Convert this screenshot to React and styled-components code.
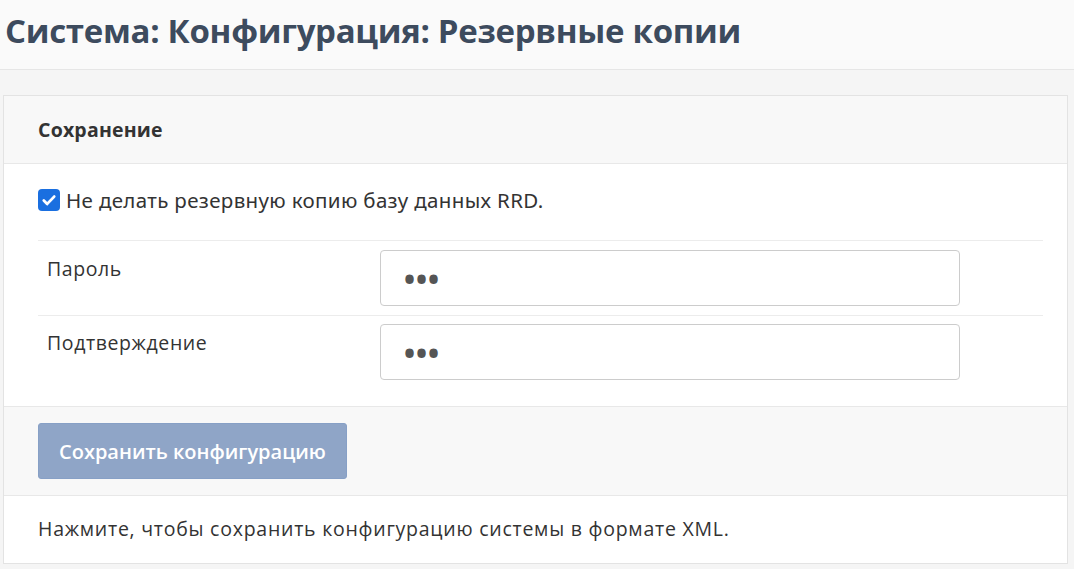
import React from 'react';
import styled, { createGlobalStyle } from 'styled-components';

const Global = createGlobalStyle`
	body {
		margin: 0;
		background: #f5f5f5;
		font-family: "Open Sans", "Noto Sans", sans-serif;
		color: #333;
	}
`;

const TitleBar = styled.header`
	height: 70px;
	background: #fafafa;
	border-bottom: 1px solid #e6e6e6;
	display: flex;
	align-items: center;
	padding: 0 5px 9px;
	box-sizing: border-box;
`;

const Title = styled.h1`
	margin: 0;
	font-size: 33px;
	font-weight: 700;
	color: #3d4b5e;
	letter-spacing: -0.3px;
`;

const Content = styled.main`
	padding: 25px 6px 0 3px;
`;

const Panel = styled.section`
	background: #fff;
	border: 1px solid #e3e3e3;
`;

const PanelHeading = styled.div`
	height: 68px;
	display: flex;
	align-items: center;
	padding: 0 34px;
	background: #f8f8f8;
	border-bottom: 1px solid #e8e8e8;
	font-size: 19.5px;
	font-weight: 700;
	letter-spacing: 0.2px;
	color: #333;
	box-sizing: border-box;
`;

const PanelBody = styled.div`
	padding: 0 24px 0 34px;
`;

const CheckRow = styled.label`
	height: 77px;
	display: flex;
	align-items: center;
	gap: 6px;
	font-family: "Noto Sans", sans-serif;
	font-size: 20.5px;
	letter-spacing: 0.35px;
	border-bottom: 1px solid #ececec;
	padding-bottom: 5px;
	box-sizing: border-box;
`;

const Box = styled.span`
	width: 22px;
	height: 22px;
	border-radius: 4px;
	background: #1a6fe0;
	display: inline-flex;
	align-items: center;
	justify-content: center;
	flex-shrink: 0;
`;

const FormRow = styled.div`
	display: grid;
	grid-template-columns: 342px 580px 1fr;
	padding: ${p => p.$last ? '8px 0 26px' : '9px 0 9px'};
	border-bottom: ${p => p.$last ? 'none' : '1px solid #ececec'};
`;

const Label = styled.div`
	padding: 5px 0 0 9px;
	font-size: 19.5px;
	letter-spacing: 0.6px;
	color: #333;
`;

const Input = styled.input`
	height: 56px;
	box-sizing: border-box;
	border: 1px solid #ccc;
	border-radius: 4px;
	padding: 0 21px;
	font-size: 40px;
	color: #555;
	letter-spacing: -3px;
	font-family: inherit;
	outline: none;
`;

const Footer = styled.div`
	background: #f8f8f8;
	border-top: 1px solid #e8e8e8;
	border-bottom: 1px solid #e8e8e8;
	padding: 16px 34px;
`;

const Button = styled.button`
	height: 56px;
	padding: 0 20px;
	background: #8fa5c7;
	border: 1px solid #87a0c6;
	border-radius: 3px;
	color: #fff;
	font-size: 20px;
	font-family: inherit;
	font-weight: 600;
`;

const Note = styled.p`
	margin: 0;
	height: 67px;
	display: flex;
	align-items: center;
	padding: 0 34px 2px;
	font-size: 19.5px;
	letter-spacing: 0.75px;
	color: #333;
	box-sizing: border-box;
`;

const Check = () => (
	<Box>
		<svg width="16" height="16" viewBox="0 0 16 16">
			<path d="M2.8 8.6l3.4 3.3L13.2 4.6" fill="none" stroke="#fff" strokeWidth="2.8" strokeLinecap="round" strokeLinejoin="round" />
		</svg>
	</Box>
);

const App = () => {
	return (
		<>
			<Global />
			<TitleBar>
				<Title>Система: Конфигурация: Резервные копии</Title>
			</TitleBar>
			<Content>
				<Panel>
					<PanelHeading>Сохранение</PanelHeading>
					<PanelBody>
						<CheckRow>
							<Check />
							Не делать резервную копию базу данных RRD.
						</CheckRow>
						<FormRow>
							<Label>Пароль</Label>
							<Input type="password" defaultValue="abc" />
						</FormRow>
						<FormRow $last>
							<Label>Подтверждение</Label>
							<Input type="password" defaultValue="abc" />
						</FormRow>
					</PanelBody>
					<Footer>
						<Button disabled>Сохранить конфигурацию</Button>
					</Footer>
					<Note>Нажмите, чтобы сохранить конфигурацию системы в формате XML.</Note>
				</Panel>
			</Content>
		</>
	);
};

export default App;
